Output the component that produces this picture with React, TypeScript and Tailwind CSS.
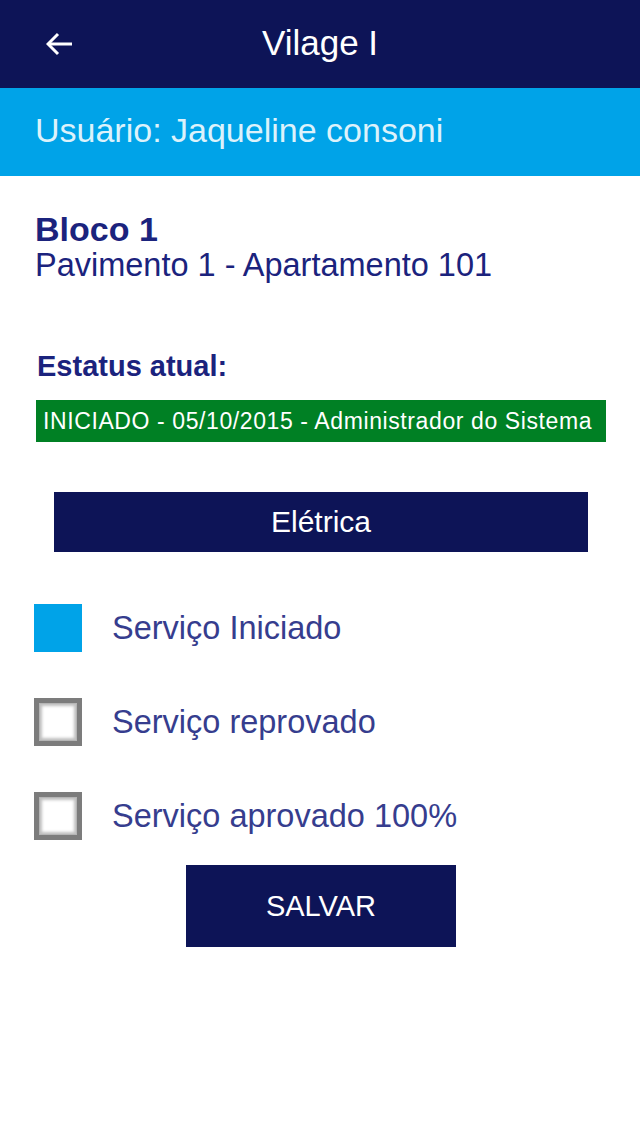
const Checkbox = ({ checked }: { checked?: boolean }) => {
  if (checked) {
    return <div className="w-12 h-12 bg-[#00a3e8] shrink-0" />;
  }
  return (
    <div className="w-12 h-12 bg-[#7c7c7c] p-[5px] shrink-0">
      <div className="w-full h-full bg-white shadow-[inset_0_0_3px_2px_rgba(0,0,0,0.25)] border border-[#b5b5b5]" />
    </div>
  );
};

const services = [
  { label: "Serviço Iniciado", checked: true },
  { label: "Serviço reprovado", checked: false },
  { label: "Serviço aprovado 100%", checked: false },
];

export default function App() {
  return (
    <div className="w-[640px] h-[1136px] bg-white font-['Liberation_Sans',Arial,sans-serif]">
      <div className="h-[88px] bg-[#0d1457] grid grid-cols-[1fr_auto_1fr] items-center">
        <div className="pl-[46px] flex items-center">
          <svg width="28" height="24" viewBox="0 0 28 24" fill="none" stroke="white" strokeWidth="3">
            <path d="M26 12H3" />
            <path d="M12 2L2 12l10 10" />
          </svg>
        </div>
        <h1 className="text-white text-[35px] leading-none pb-1">Vilage I</h1>
        <div />
      </div>

      <div className="h-[88px] bg-[#00a3e8] flex items-center px-[35px]">
        <p className="text-[#dcf2fb] text-[34px] leading-none pb-1">Usuário: Jaqueline consoni</p>
      </div>

      <div className="px-[35px] pt-[35px]">
        <h2 className="text-[#1b237d] text-[34px] font-bold leading-[36px]">Bloco 1</h2>
        <p className="text-[#1b237d] text-[32.5px] leading-[36px]">Pavimento 1 - Apartamento 101</p>

        <p className="text-[#1b237d] text-[29px] font-bold leading-[32px] mt-[67px] pl-[2px]">Estatus atual:</p>
        <div className="mt-[18px] ml-[1px] w-[570px] h-[42px] bg-[#008024] flex items-center px-[7px]">
          <span className="text-white text-[23px] tracking-[0.6px] leading-none">
            INICIADO - 05/10/2015 - Administrador do Sistema
          </span>
        </div>
      </div>

      <div className="flex justify-center pl-[2px] mt-[50px]">
        <div className="w-[534px] h-[60px] bg-[#0d1457] flex items-center justify-center">
          <span className="text-white text-[30px] leading-none">Elétrica</span>
        </div>
      </div>

      <div className="px-[34px] mt-[52px] flex flex-col gap-[46px]">
        {services.map((s) => (
          <div key={s.label} className="flex items-center gap-[30px]">
            <Checkbox checked={s.checked} />
            <span className="text-[#363d8e] text-[32.5px] leading-none">{s.label}</span>
          </div>
        ))}
      </div>

      <div className="flex justify-center pl-[2px] mt-[25px]">
        <div className="w-[270px] h-[82px] bg-[#0d1457] flex items-center justify-center">
          <span className="text-white text-[29px] leading-none">SALVAR</span>
        </div>
      </div>
    </div>
  );
}
